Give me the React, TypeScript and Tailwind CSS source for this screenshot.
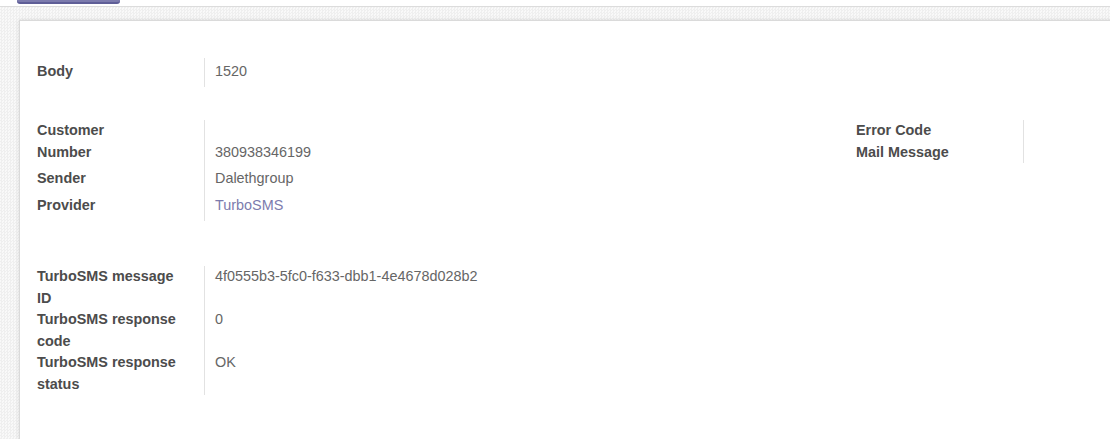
import React from 'react'

type Field = {
  label: React.ReactNode
  value?: string
  link?: boolean
  // height of the row and top offset of the value text
  h: string
  vpad?: string
}

const Row: React.FC<{ f: Field }> = ({ f }) => (
  <div className={`flex ${f.h}`}>
    <div className={`w-[167px] shrink-0 font-bold text-[#4c4c4c] ${f.vpad ?? ''}`}>{f.label}</div>
    <div className="border-l border-[#e2e2e2] pl-[10px] flex-1">
      <div className={f.link ? 'text-[#7c7bad]' : 'text-[#666666]'}>
        {f.value && <div className={f.vpad ?? 'pt-[21.5px]'}>{f.value}</div>}
      </div>
    </div>
  </div>
)

const customer: Field[] = [
  {
    label: (
      <>
        Customer
        <br />
        Number
      </>
    ),
    value: '380938346199',
    h: 'h-[43px]'
  },
  { label: 'Sender', value: 'Dalethgroup', h: 'h-[27px]', vpad: 'pt-[5px]' },
  { label: 'Provider', value: 'TurboSMS', link: true, h: 'h-[31px]', vpad: 'pt-[5px]' }
]

const errors: Field[] = [
  { label: 'Error Code', h: 'h-[21.5px]' },
  { label: 'Mail Message', h: 'h-[21.5px]' }
]

const turbo = [
  { label: 'TurboSMS message ID', value: '4f0555b3-5fc0-f633-dbb1-4e4678d028b2' },
  { label: 'TurboSMS response code', value: '0' },
  { label: 'TurboSMS response status', value: 'OK' }
]

export default function App() {
  return (
    <div
      className="w-[1110px] h-[439px] overflow-hidden bg-white text-[14.4px] leading-[21.5px]"
      style={{ fontFamily: '"Liberation Sans", Arial, sans-serif' }}
    >
      {/* control panel strip */}
      <div className="h-[7px] bg-white border-b border-[#dcdcdc] relative">
        <div className="absolute left-[17px] top-0 w-[103px] h-[4px] bg-[#7c7bad] border-b-2 border-[#5f5e97] rounded-b-[3px]" />
      </div>
      {/* form background */}
      <div className="h-[432px] pl-[19px] pt-[13px] bg-[repeating-conic-gradient(#efefef_0_25%,#f9f9f9_0_50%)] bg-[length:3px_3px]">
        <div className="w-[1110px] h-[430px] bg-white border border-[#dadada] shadow-[0_0_4px_rgba(0,0,0,0.12)] pl-[17px] pt-[37px]">
          {/* body */}
          <div className="flex h-[29px]">
            <div className="w-[167px] shrink-0 pt-[2.5px] font-bold text-[#4c4c4c]">Body</div>
            <div className="border-l border-[#e2e2e2] pl-[10px] pt-[2.5px] text-[#666666]">1520</div>
          </div>

          {/* customer / errors */}
          <div className="flex mt-[33px]">
            <div className="w-[819px] shrink-0">
              {customer.map((f, i) => (
                <Row key={i} f={f} />
              ))}
            </div>
            <div className="flex-1 self-start">
              {errors.map((f, i) => (
                <Row key={i} f={{ ...f, vpad: '' }} />
              ))}
            </div>
          </div>

          {/* turbosms */}
          <div className="mt-[45px] w-[819px]">
            {turbo.map((f) => (
              <div key={f.label} className="flex h-[43px]">
                <div className="w-[167px] shrink-0 pr-[20px] font-bold text-[#4c4c4c]">{f.label}</div>
                <div className="border-l border-[#e2e2e2] pl-[10px] flex-1 text-[#666666]">{f.value}</div>
              </div>
            ))}
          </div>
        </div>
      </div>
    </div>
  )
}
